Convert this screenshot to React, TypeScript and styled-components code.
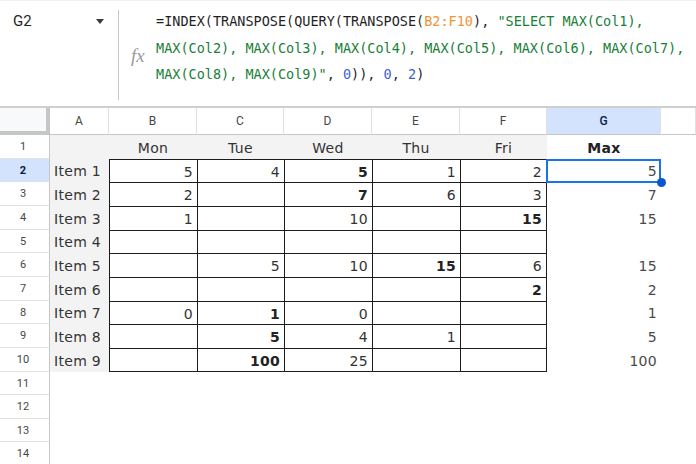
import styled, { createGlobalStyle } from "styled-components";

type Kind = "plain" | "range" | "string" | "number";

const formula: [Kind, string][][] = [
	[
		["plain", "=INDEX(TRANSPOSE(QUERY(TRANSPOSE("],
		["range", "B2:F10"],
		["plain", "), "],
		["string", '"SELECT MAX(Col1),'],
	],
	[["string", "MAX(Col2), MAX(Col3), MAX(Col4), MAX(Col5), MAX(Col6), MAX(Col7),"]],
	[
		["string", 'MAX(Col8), MAX(Col9)"'],
		["plain", ", "],
		["number", "0"],
		["plain", ")), "],
		["number", "0"],
		["plain", ", "],
		["number", "2"],
		["plain", ")"],
	],
];

const kindColors: Record<Kind, string> = {
	plain: "#1f1f1f",
	range: "#f09433",
	string: "#188038",
	number: "#3d63d6",
};

const columns = ["A", "B", "C", "D", "E", "F", "G", ""];
const days = ["Mon", "Tue", "Wed", "Thu", "Fri"];
const rowHeights = [24, 23, 24, 24, 23, 24, 24, 23, 24, 24, 23, 24, 23, 24];

type Item = { label: string; values: (number | null)[]; bold: number; max: number | null };

const items: Item[] = [
	{ label: "Item 1", values: [5, 4, 5, 1, 2], bold: 2, max: 5 },
	{ label: "Item 2", values: [2, null, 7, 6, 3], bold: 2, max: 7 },
	{ label: "Item 3", values: [1, null, 10, null, 15], bold: 4, max: 15 },
	{ label: "Item 4", values: [null, null, null, null, null], bold: -1, max: null },
	{ label: "Item 5", values: [null, 5, 10, 15, 6], bold: 3, max: 15 },
	{ label: "Item 6", values: [null, null, null, null, 2], bold: 4, max: 2 },
	{ label: "Item 7", values: [0, 1, 0, null, null], bold: 1, max: 1 },
	{ label: "Item 8", values: [null, 5, 4, 1, null], bold: 1, max: 5 },
	{ label: "Item 9", values: [null, 100, 25, null, null], bold: 1, max: 100 },
];

export default function App() {
	return (
		<>
			<GlobalStyle />
			<FormulaBar>
				<NameBox>
					<CellRef>G2</CellRef>
					<Caret />
				</NameBox>
				<Divider />
				<FxIcon>fx</FxIcon>
				<Formula>
					{formula.map((line, i) => (
						<FormulaLine key={i}>
							{line.map(([kind, text], j) => (
								<Token key={j} $kind={kind}>
									{text}
								</Token>
							))}
						</FormulaLine>
					))}
				</Formula>
			</FormulaBar>

			<Sheet>
				<Corner />
				{columns.map((c, i) => (
					<ColHeader key={c + i} $active={c === "G"}>
						{c}
					</ColHeader>
				))}

				{rowHeights.map((_, r) => {
					const rowNo = r + 1;
					const item = r >= 1 && r <= 9 ? items[r - 1] : null;
					return [
						<RowHeader key={"h" + r} $active={rowNo === 2}>
							{rowNo}
						</RowHeader>,
						<Cell key={"a" + r} $shade={rowNo <= 10} $align="left">
							{item?.label}
						</Cell>,
						...days.map((d, c) => {
							if (rowNo === 1)
								return (
									<Cell key={d} $shade $align="center">
										{d}
									</Cell>
								);
							if (item) {
								const v = item.values[c];
								return (
									<Cell
										key={d}
										$boxed
										$lastCol={c === 4}
										$lastRow={rowNo === 10}
										$bold={item.bold === c}
									>
										{v ?? ""}
									</Cell>
								);
							}
							return <Cell key={d} />;
						}),
						rowNo === 1 ? (
							<Cell key="g" $align="center" $bold>
								Max
							</Cell>
						) : (
							<Cell key="g" $muted $selected={rowNo === 2}>
								{item?.max ?? ""}
							</Cell>
						),
						<Cell key="rest" />,
					];
				})}
			</Sheet>
		</>
	);
}

const GlobalStyle = createGlobalStyle`
	html, body {
		margin: 0;
		background: #fff;
		overflow: hidden;
	}
	* {
		box-sizing: border-box;
	}
`;

const FormulaBar = styled.div`
	display: flex;
	height: 108px;
	border-top: 1px solid #f1f1f1;
	border-bottom: 2px solid #cfcfcf;
	background: #fff;
`;

const NameBox = styled.div`
	display: flex;
	align-items: flex-start;
	justify-content: space-between;
	width: 118px;
	padding: 11px 14px 0 13px;
`;

const CellRef = styled.span`
	font-family: Roboto, "Liberation Sans", sans-serif;
	font-size: 15px;
	color: #1f1f1f;
`;

const Caret = styled.span`
	margin-top: 7px;
	width: 0;
	height: 0;
	border-left: 4px solid transparent;
	border-right: 4px solid transparent;
	border-top: 5px solid #3c3c3c;
`;

const Divider = styled.div`
	width: 1px;
	margin: 9px 0 6px;
	background: #c7c7c7;
`;

const FxIcon = styled.div`
	width: 37px;
	padding: 44px 0 0 12px;
	font-family: "Liberation Serif", serif;
	font-style: italic;
	font-size: 19px;
	color: #9a9a9a;
`;

const Formula = styled.div`
	padding-top: 7px;
	font-family: "DejaVu Sans Mono", "Liberation Mono", monospace;
	font-size: 13.5px;
	line-height: 26.5px;
	white-space: pre;
`;

const FormulaLine = styled.div``;

const Token = styled.span<{ $kind: Kind }>`
	color: ${(p) => kindColors[p.$kind]};
`;

const Sheet = styled.div`
	display: grid;
	grid-template-columns: 50px 59px 88px 87px 88px 88px 87px 114px 1fr;
	grid-template-rows: 27px ${rowHeights.map((h) => h + "px").join(" ")};
`;

const Corner = styled.div`
	background: #f8f9fa;
	border-right: 4px solid #c4c7c5;
	border-bottom: 4px solid #c4c7c5;
`;

const ColHeader = styled.div<{ $active?: boolean }>`
	display: flex;
	align-items: center;
	justify-content: center;
	background: ${(p) => (p.$active ? "#d3e3fd" : "#fff")};
	border-right: 1px solid #e1e1e1;
	border-bottom: 1px solid #c4c7c5;
	font-family: Roboto, "Liberation Sans", sans-serif;
	font-size: 12px;
	font-weight: ${(p) => (p.$active ? 500 : 400)};
	color: ${(p) => (p.$active ? "#0b1f44" : "#444746")};
`;

const RowHeader = styled.div<{ $active?: boolean }>`
	display: flex;
	align-items: center;
	justify-content: center;
	padding-right: 3px;
	background: ${(p) => (p.$active ? "#d3e3fd" : "#fff")};
	border-right: 1px solid #c4c7c5;
	border-bottom: 1px solid #e1e1e1;
	font-family: Roboto, "Liberation Sans", sans-serif;
	font-size: 11px;
	font-weight: ${(p) => (p.$active ? 700 : 400)};
	color: ${(p) => (p.$active ? "#041e49" : "#444746")};
`;

const Cell = styled.div<{
	$shade?: boolean;
	$boxed?: boolean;
	$lastCol?: boolean;
	$lastRow?: boolean;
	$bold?: boolean;
	$muted?: boolean;
	$selected?: boolean;
	$align?: "left" | "center" | "right";
}>`
	position: relative;
	display: flex;
	align-items: center;
	justify-content: ${(p) =>
		p.$align === "left" ? "flex-start" : p.$align === "center" ? "center" : "flex-end"};
	padding: 1px 4px 0 4px;
	background: ${(p) => (p.$shade ? "#f3f3f3" : "#fff")};
	border-left: ${(p) => (p.$boxed ? "1px solid #1c1c1c" : "none")};
	border-top: ${(p) => (p.$boxed ? "1px solid #1c1c1c" : "none")};
	border-right: ${(p) => (p.$lastCol ? "1px solid #1c1c1c" : "none")};
	border-bottom: ${(p) => (p.$lastRow ? "1px solid #1c1c1c" : "none")};
	font-family: "DejaVu Sans", Verdana, sans-serif;
	font-size: 14px;
	letter-spacing: 0.3px;
	font-weight: ${(p) => (p.$bold ? 700 : 400)};
	color: ${(p) => (p.$bold ? "#222" : p.$muted ? "#4a4a4a" : "#333")};
	white-space: nowrap;

	${(p) =>
		p.$selected &&
		`
		&::before {
			content: "";
			position: absolute;
			inset: 0 0 -1px -1px;
			border: 2px solid #1a73e8;
			z-index: 2;
		}
		&::after {
			content: "";
			position: absolute;
			right: -5px;
			bottom: -5px;
			width: 9px;
			height: 9px;
			border-radius: 50%;
			background: #0b57d0;
			z-index: 3;
		}
	`}
`;
